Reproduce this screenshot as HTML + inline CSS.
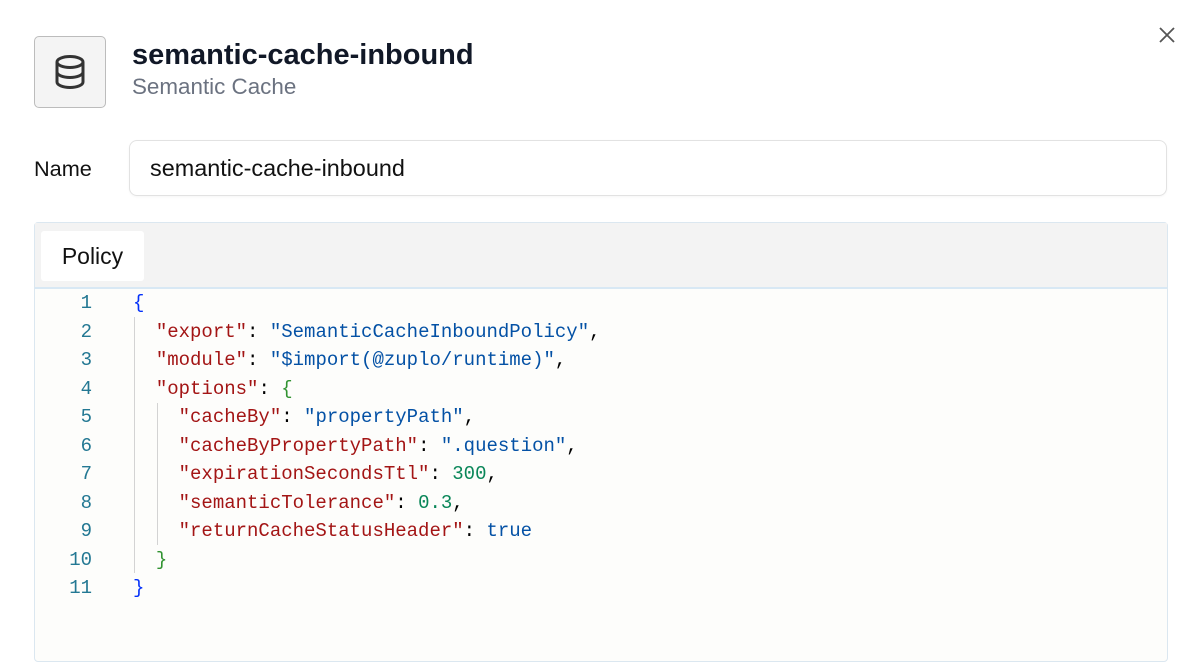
<!DOCTYPE html>
<html><head><style>
body{margin:0;width:1200px;height:639px;background:#fff;font-family:"Liberation Sans",sans-serif;position:relative;overflow:hidden}
.icon{position:absolute;left:34px;top:36px;width:72px;height:72px;border:1.5px solid #bcbcbc;border-radius:5px;background:#f4f4f4;box-sizing:border-box}
.title{position:absolute;left:132px;top:39px;font-size:29px;font-weight:bold;color:#111827}
.sub{position:absolute;left:132px;top:74px;font-size:22.4px;color:#6b7280}
.x{position:absolute;left:1158px;top:26px}
.lbl{position:absolute;left:34px;top:156px;font-size:21.7px;color:#111}
.inp{position:absolute;left:129px;top:140px;width:1038px;height:56px;border:1px solid #e2e2e2;border-radius:8px;box-sizing:border-box;font-size:23.4px;color:#111;padding:14px 0 0 20px;box-shadow:0 1px 2px rgba(0,0,0,.04)}
.panel{position:absolute;left:34px;top:222px;width:1134px;height:440px;border:1px solid #dbe7f0;border-radius:4px;background:#fdfdfb;box-sizing:border-box}
.head{height:64px;background:#f3f3f3;border-bottom:2px solid #d8e8f4}
.tab{position:absolute;left:6px;top:8px;width:103px;height:50px;background:#fff;border-radius:3px;font-size:23px;color:#111;text-align:center;line-height:50px}
.code{position:absolute;left:0;top:66px;font-family:"Liberation Mono",monospace;font-size:19px;line-height:28.5px}
.ln{position:absolute;left:0;width:57px;text-align:right;color:#237893}
.c{position:absolute;left:98px;white-space:pre;color:#000}
.k{color:#a31515}.s{color:#0451a5}.n{color:#098658}.b{color:#0431fa}.g{color:#319331}
.guide{position:absolute;width:1px;background:#d3d3d3}
</style></head><body>
<div class="icon"><svg width="72" height="72" viewBox="0 0 72 72" style="position:absolute;left:-1.5px;top:-1.5px"><g fill="none" stroke="#333" stroke-width="3"><ellipse cx="36" cy="26" rx="13" ry="5.5"/><path d="M23 26v20c0 3 5.8 5.5 13 5.5s13-2.5 13-5.5V26M23 36c0 3 5.8 5.5 13 5.5s13-2.5 13-5.5"/></g></svg></div>
<div class="title">semantic-cache-inbound</div>
<div class="sub">Semantic Cache</div>
<svg class="x" width="18" height="18" viewBox="0 0 18 18"><path d="M2 2L16 16M16 2L2 16" stroke="#555" stroke-width="1.8"/></svg>
<div class="lbl">Name</div>
<div class="inp">semantic-cache-inbound</div>
<div class="panel"><div class="head"></div><div class="tab">Policy</div>
<div class="code">
<div class="guide" style="left:99px;top:28px;height:256px"></div>
<div class="guide" style="left:122px;top:114px;height:142px"></div>
<div class="ln" style="top:0">1</div><div class="c" style="top:0"><span class="b">{</span></div>
<div class="ln" style="top:28.5px">2</div><div class="c" style="top:28.5px">  <span class="k">"export"</span>: <span class="s">"SemanticCacheInboundPolicy"</span>,</div>
<div class="ln" style="top:57px">3</div><div class="c" style="top:57px">  <span class="k">"module"</span>: <span class="s">"$import(@zuplo/runtime)"</span>,</div>
<div class="ln" style="top:85.5px">4</div><div class="c" style="top:85.5px">  <span class="k">"options"</span>: <span class="g">{</span></div>
<div class="ln" style="top:114px">5</div><div class="c" style="top:114px">    <span class="k">"cacheBy"</span>: <span class="s">"propertyPath"</span>,</div>
<div class="ln" style="top:142.5px">6</div><div class="c" style="top:142.5px">    <span class="k">"cacheByPropertyPath"</span>: <span class="s">".question"</span>,</div>
<div class="ln" style="top:171px">7</div><div class="c" style="top:171px">    <span class="k">"expirationSecondsTtl"</span>: <span class="n">300</span>,</div>
<div class="ln" style="top:199.5px">8</div><div class="c" style="top:199.5px">    <span class="k">"semanticTolerance"</span>: <span class="n">0.3</span>,</div>
<div class="ln" style="top:228px">9</div><div class="c" style="top:228px">    <span class="k">"returnCacheStatusHeader"</span>: <span class="s">true</span></div>
<div class="ln" style="top:256.5px">10</div><div class="c" style="top:256.5px">  <span class="g">}</span></div>
<div class="ln" style="top:285px">11</div><div class="c" style="top:285px"><span class="b">}</span></div>
</div></div>
</body></html>
